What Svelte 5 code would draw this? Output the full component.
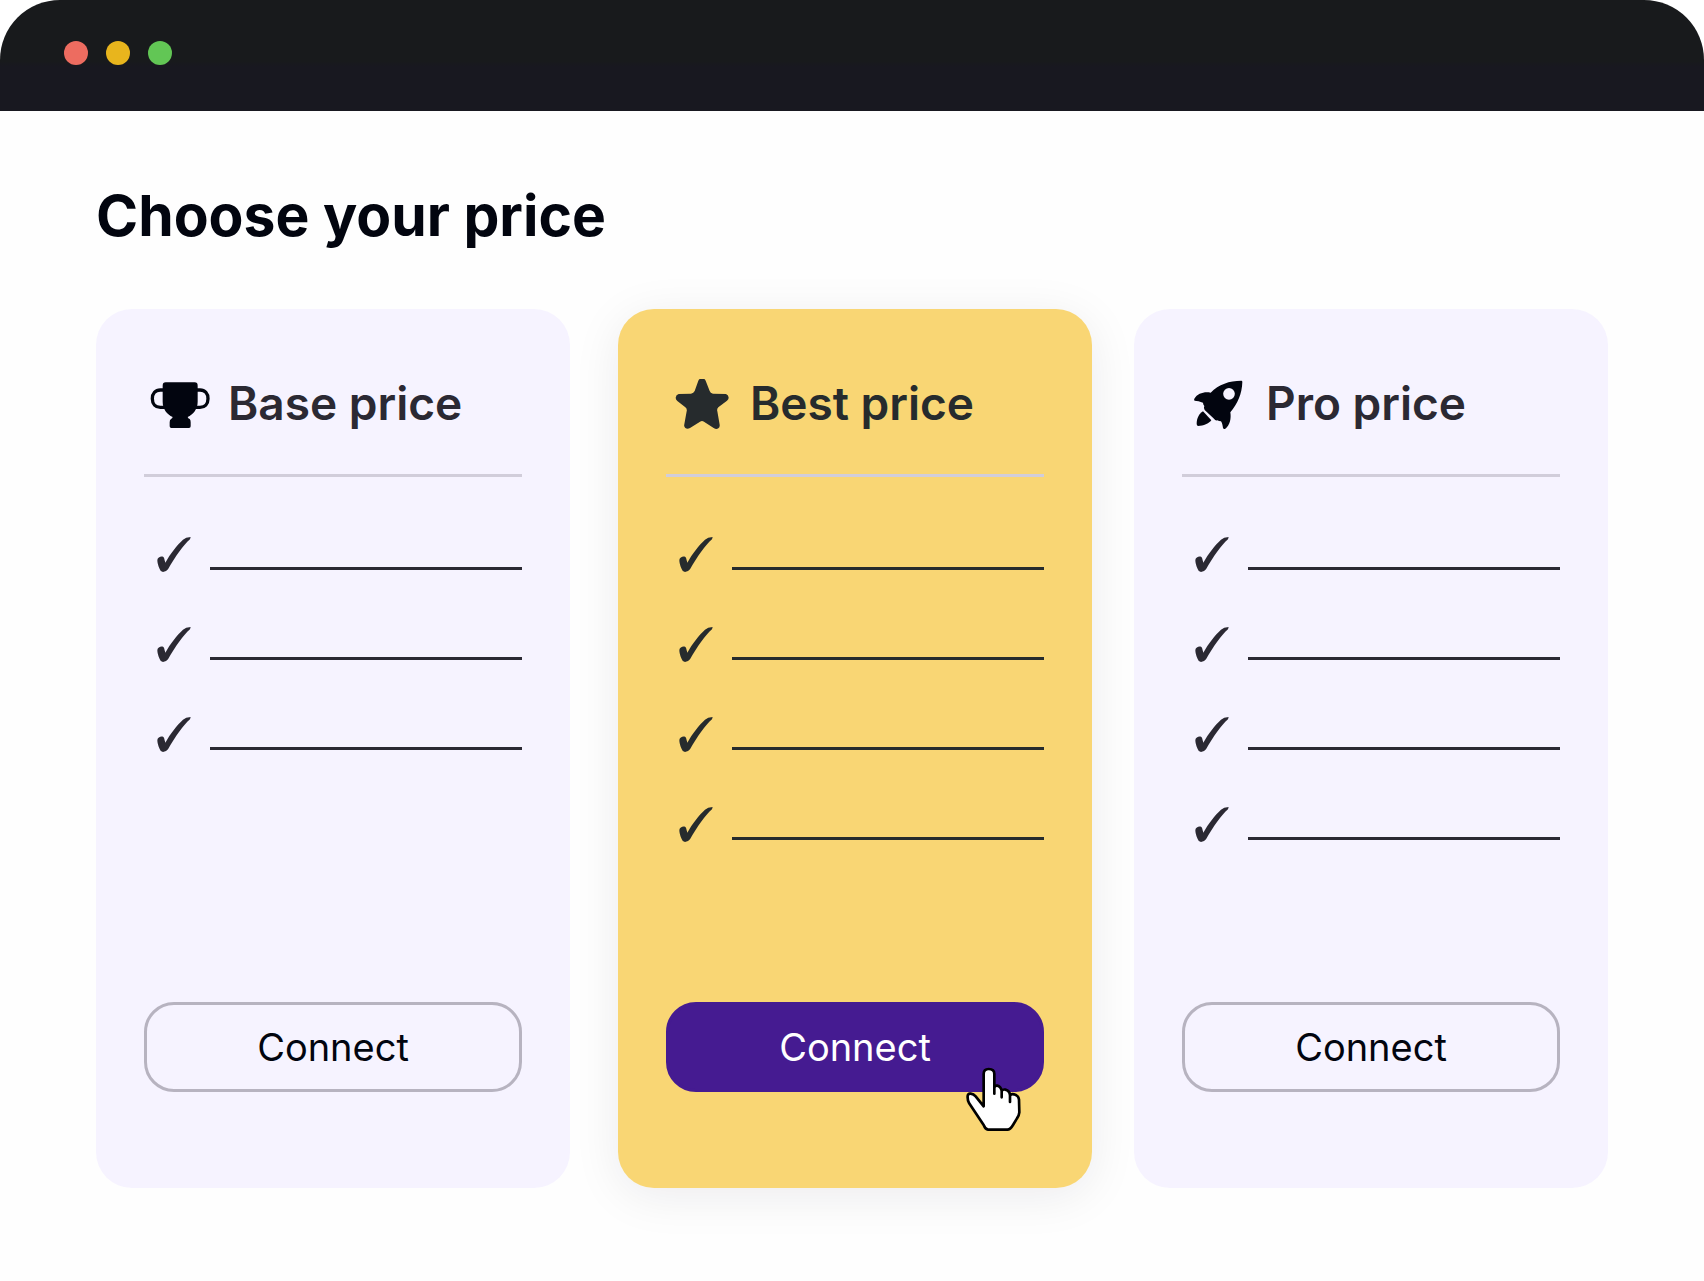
<script lang="ts">
  /**
   * Pricing picker shown inside a mock browser window: three plans, with the
   * featured one raised and its call to action filled in.
   */

  type Icon = 'trophy' | 'star' | 'rocket';

  interface Plan {
    name: string;
    icon: Icon;
    features: number;
    featured?: boolean;
  }

  const plans: Plan[] = [
    { name: 'Base price', icon: 'trophy', features: 3 },
    { name: 'Best price', icon: 'star', features: 4, featured: true },
    { name: 'Pro price', icon: 'rocket', features: 4 },
  ];
</script>

<div class="window">
  <header class="titlebar">
    <span class="dot red"></span>
    <span class="dot yellow"></span>
    <span class="dot green"></span>
  </header>

  <main>
    <h1>Choose your price</h1>

    <div class="plans">
      {#each plans as plan (plan.name)}
        <section class="plan" class:featured={plan.featured}>
          <div class="plan-head">
            <span class="plan-icon">
              {#if plan.icon === 'trophy'}
                <svg width="60" height="48" viewBox="60 63 180 144" aria-hidden="true">
                  <path
                    d="M107 67H194Q203 67 203 77V125C203 147 190 163 173 171Q174 175 179 177Q182 180 182 187V199Q182 204 177 204H124Q119 204 119 199V187Q119 180 123 177Q127 175 128 171C111 163 98 147 98 125V77Q98 67 107 67Z"
                  />
                  <path
                    class="handles"
                    d="M100 90H91C76 90 67 101 67 116C67 132 77 142 91 142H106M201 90H210C225 90 234 101 234 116C234 132 224 142 210 142H195"
                  />
                </svg>
              {:else if plan.icon === 'star'}
                <svg width="54" height="52" viewBox="105 55 162 156" aria-hidden="true">
                  <path
                    d="M175 60Q178 53 186 53Q194 53 197 60L209 91Q211 98 219 99L258 100Q266 103 266 111Q266 116 261 120L235 140Q230 145 232 152L239 192Q240 200 235 203Q229 207 221 202L192 183Q186 179 180 183L150 202Q142 206 136 202Q131 198 133 191L140 152Q142 145 136 140L112 121Q107 117 107 111Q108 102 116 100L153 99Q161 98 164 91Z"
                  />
                </svg>
              {:else}
                <svg width="50" height="50" viewBox="99 60 150 150" aria-hidden="true">
                  <path
                    fill-rule="evenodd"
                    d="M244 62Q247 62 247 66C246 101 233 131 211 157C214 175 210 196 196 206Q191 208 189 204C188 197 187 190 183 184Q177 184 172 181Q166 183 162 176L134 150Q130 143 133 138Q129 134 129 128C120 124 111 122 104 122Q101 120 103 116C113 100 133 94 152 98C176 73 208 62 244 62ZM207 84A17.500 17.500 0 1 0 207 119A17.500 17.500 0 1 0 207 84Z"
                  />
                  <path
                    d="M129 154L154 181C146 191 131 198 114 198Q110 197 110 191C110 176 117 161 129 154Z"
                  />
                </svg>
              {/if}
            </span>
            <h2>{plan.name}</h2>
          </div>

          <ul>
            {#each Array(plan.features) as _}
              <li>
                <svg width="36" height="36" viewBox="48 48 108 108" aria-hidden="true">
                  <path
                    d="M152 51L150 58C131 74 106 110 84 148Q78 156 69 156Q61 155 59 147C54 137 52 127 52 120C53 110 68 106 72 113C74 118 74 123 76 128C91 101 111 75 129 59Q137 52 152 51Z"
                  />
                </svg>
                <span class="line"></span>
              </li>
            {/each}
          </ul>

          <div class="action">
            <button type="button">Connect</button>
            {#if plan.featured}
              <svg
                class="pointer"
                width="57"
                height="66"
                viewBox="75 48 171 198"
                aria-hidden="true"
              >
                <path
                  d="M131 169V72Q131 57 146 57Q163 57 163 72V131V113Q165 106 172 107Q182 109 185 122V142V124Q188 117 196 119Q209 122 210 136V156V138Q212 131 222 133Q236 137 237 149L238 187Q237 197 231 205L219 225Q211 239 202 239H144Q136 238 131 225L87 159Q82 149 83 138Q84 130 92 131Q101 132 107 139L131 169Z"
                />
              </svg>
            {/if}
          </div>
        </section>
      {/each}
    </div>
  </main>
</div>

<style>
  :global(body) {
    background: #fff;
  }

  .window {
    min-height: 100vh;
    border-radius: 60px 60px 0 0;
    overflow: hidden;
    background: #fefefe;
    color: #02050f;
    font-family: Inter, 'Liberation Sans', sans-serif;
  }

  .titlebar {
    display: flex;
    align-items: center;
    gap: 18px;
    box-sizing: border-box;
    height: 111px;
    padding: 0 64px 6px;
    background: linear-gradient(#181a1c 55%, #181820 60%);
  }

  .dot {
    width: 24px;
    height: 24px;
    border-radius: 50%;
  }

  .red {
    background: #ed6c60;
  }

  .yellow {
    background: #e8b51d;
  }

  .green {
    background: #62c655;
  }

  main {
    padding: 69px 96px 93px;
  }

  h1 {
    margin: 0 0 57px;
    font-size: 57px;
    font-weight: 700;
    line-height: 72px;
  }

  .plans {
    display: flex;
    gap: 42px;
  }

  .plan {
    flex: 1;
    display: flex;
    flex-direction: column;
    padding: 48px 48px 96px;
    border-radius: 36px;
    background: #f6f3ff;
    color: #2b2933;
  }

  .plan.featured {
    margin-left: 6px;
    background: #f9d674;
    color: #262b2d;
    box-shadow: 0 8px 48px rgba(20, 15, 40, 0.08);
  }

  .plan-head {
    display: flex;
    align-items: center;
    gap: 12px;
    height: 96px;
    padding-bottom: 21px;
    border-bottom: 3px solid #d1cdda;
  }

  .plan-icon {
    display: flex;
    justify-content: center;
    width: 72px;
    color: #02050f;
  }

  .featured .plan-icon {
    color: inherit;
  }

  h2 {
    margin: 0;
    padding-bottom: 4px;
    font-size: 46px;
    font-weight: 600;
    line-height: 54px;
    white-space: nowrap;
  }

  svg {
    flex: none;
    fill: currentColor;
  }

  .handles {
    fill: none;
    stroke: currentColor;
    stroke-width: 10;
  }

  ul {
    display: flex;
    flex-direction: column;
    gap: 54px;
    margin: 0 0 160px;
    padding: 59px 0 0 12px;
    list-style: none;
  }

  li {
    display: flex;
    align-items: flex-end;
    gap: 18px;
  }

  .line {
    flex: 1;
    margin-bottom: 2px;
    border-bottom: 3px solid currentColor;
  }

  .action {
    position: relative;
    margin-top: auto;
  }

  button {
    display: block;
    width: 100%;
    height: 90px;
    border: 3px solid #b7b3c0;
    border-radius: 30px;
    background: transparent;
    color: #02050f;
    font: 400 38px/48px Inter, 'Liberation Sans', sans-serif;
    cursor: pointer;
  }

  .featured button {
    border-color: #451b91;
    background: #451b91;
    color: #fff;
  }

  .pointer {
    position: absolute;
    top: 64px;
    right: 22px;
    fill: #fff;
    stroke: #000;
    stroke-width: 8;
    stroke-linejoin: round;
    pointer-events: none;
  }
</style>
